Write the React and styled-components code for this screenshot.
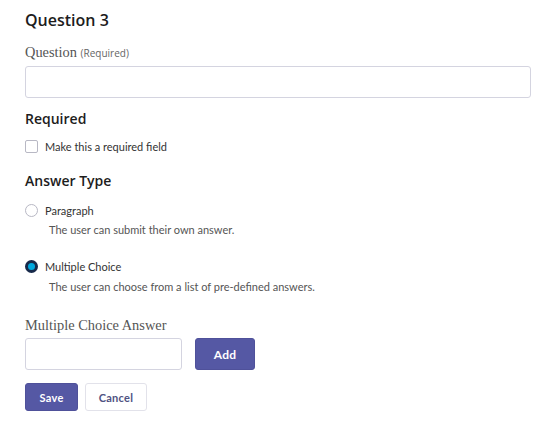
import React, { useState } from "react";
import styled, { createGlobalStyle } from "styled-components";

const GlobalStyle = createGlobalStyle`
  body {
    margin: 0;
    background: #ffffff;
    font-family: Lato, "Open Sans", sans-serif;
    color: #333;
  }
`;

const Page = styled.div`
  padding: 9px 19px 0 25px;
  display: flex;
  flex-direction: column;
`;

const Title = styled.h2`
  margin: 0;
  font-family: "Open Sans", sans-serif;
  font-weight: 600;
  font-size: 16px;
  line-height: 22px;
  color: #1d1d1d;
`;

const FieldLabel = styled.label`
  display: block;
  margin-top: ${(p) => p.top || 0}px;
  font-family: "Liberation Serif", serif;
  font-size: 14.4px;
  line-height: 18px;
  color: #555;
  small {
    font-family: "Open Sans", sans-serif;
    font-size: 10px;
    color: #666;
  }
`;

const InputWrap = styled.div`
  margin-top: 4px;
`;

const TextInput = styled.input`
  box-sizing: border-box;
  width: ${(p) => p.w || "100%"};
  height: 32px;
  margin: 0;
  border: 1px solid #d4d4e0;
  border-radius: 3px;
  padding: 0 8px;
  font-size: 13px;
  outline: none;
`;

const SectionTitle = styled.h3`
  margin: ${(p) => p.top || 0}px 0 0;
  font-family: "Open Sans", sans-serif;
  font-weight: 600;
  font-size: 14px;
  line-height: 20px;
  color: #1d1d1d;
`;

const OptionRow = styled.label`
  display: flex;
  align-items: center;
  gap: 7px;
  margin-top: ${(p) => p.top || 0}px;
  font-size: 11px;
  color: #333;
  cursor: pointer;
`;

const Box = styled.span`
  box-sizing: border-box;
  width: 13px;
  height: 13px;
  border: 1px solid #b8b8c4;
  border-radius: 2px;
  background: #fff;
`;

const Radio = styled.span`
  box-sizing: border-box;
  width: 13px;
  height: 13px;
  border-radius: 50%;
  border: ${(p) => (p.checked ? "3px solid #17294a" : "1px solid #b8b8c4")};
  background: ${(p) => (p.checked ? "#00a8de" : "#fff")};
`;

const Hint = styled.div`
  margin: ${(p) => p.top || 7}px 0 0 24px;
  font-size: 11px;
  color: #555;
`;

const Row = styled.div`
  display: flex;
  gap: ${(p) => p.gap || 13}px;
  margin-top: ${(p) => p.top || 0}px;
`;

const Button = styled.button`
  box-sizing: border-box;
  height: ${(p) => p.h || 28}px;
  width: ${(p) => p.w}px;
  border-radius: 3px;
  font-family: Lato, sans-serif;
  font-weight: 700;
  font-size: ${(p) => p.fs || 11}px;
  letter-spacing: 0.3px;
  cursor: pointer;
  border: 1px solid ${(p) => (p.primary ? "#4f519a" : "#e2e2ea")};
  background: ${(p) => (p.primary ? "#5558a4" : "#fff")};
  color: ${(p) => (p.primary ? "#fff" : "#4f5282")};
`;

export default function App() {
  const [type, setType] = useState("multiple");
  return (
    <>
      <GlobalStyle />
      <Page>
        <Title>Question 3</Title>
        <FieldLabel top={12}>
          Question <small>(Required)</small>
        </FieldLabel>
        <InputWrap>
          <TextInput />
        </InputWrap>

        <SectionTitle top={11}>Required</SectionTitle>
        <OptionRow top={11}>
          <Box />
          Make this a required field
        </OptionRow>

        <SectionTitle top={18}>Answer Type</SectionTitle>
        <OptionRow top={13} onClick={() => setType("paragraph")}>
          <Radio checked={type === "paragraph"} />
          Paragraph
        </OptionRow>
        <Hint top={6}>The user can submit their own answer.</Hint>

        <OptionRow top={24} onClick={() => setType("multiple")}>
          <Radio checked={type === "multiple"} />
          Multiple Choice
        </OptionRow>
        <Hint top={7}>The user can choose from a list of pre-defined answers.</Hint>

        <FieldLabel top={23}>Multiple Choice Answer</FieldLabel>
        <Row top={4}>
          <TextInput w="157px" />
          <Button primary w={60} h={32} fs={12}>
            Add
          </Button>
        </Row>
        <Row top={13} gap={7}>
          <Button primary w={53}>
            Save
          </Button>
          <Button w={62}>Cancel</Button>
        </Row>
      </Page>
    </>
  );
}
